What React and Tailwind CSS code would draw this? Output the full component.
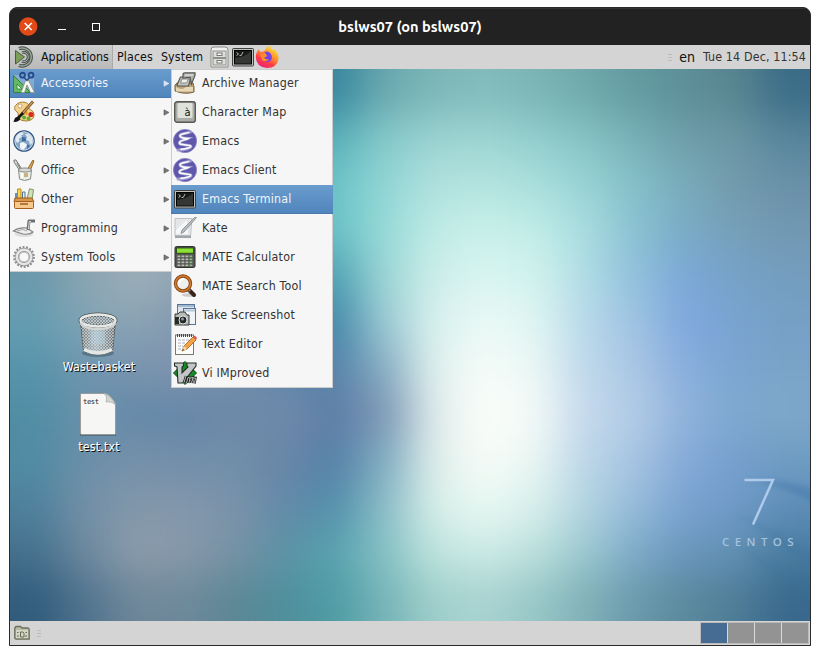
import React from "react";

const UI_FONT = "font-['DejaVu_Sans_Condensed','DejaVu_Sans',sans-serif] [font-stretch:condensed]";

/* Wallpaper: rows of colour samples, softened into one another. */
const WALL = [
  "3f7f92 3f7f92 3f7f92 3f7f92 3f7f92 3f7f92 3787a0 69a8ae 7cb6b7 83bcbc 7bb5b5 6fa9ab 639aa0 5d8f99 58858f 3a6c87",
  "5a9fae 5a9fae 5a9fae 5a9fae 5a9fae 55a5b0 58b0b8 86c9cb 9bd3d1 9cd5d2 93cecd 86c2c5 78b0b7 6d9ea9 6c96a4 57859c",
  "6aa5b0 6aa5b0 6aa5b0 6aa5b0 6aa5b0 65b5bd 6cc4c8 92d6d5 b0e1de b4e4e0 a9dfdc 98d3d5 85bfc8 78acba 739aab 6990a8",
  "6f97ab 85a0af 94abb7 8ca3b3 7aa0b0 5fafba 6ac2c7 97dad8 c0ebe6 c9f0ea c1ede8 a8dddf 8ac1d2 79abc6 769fb8 7298b2",
  "6a98aa 8ba4b1 9dafb9 92a5b4 7a9ab0 4f95aa 4fa2b3 9dd6d6 cdeeea d9f5f1 d1f2ee b0dce5 91c0dc 7aa8d8 76a2c8 749dbe",
  "669db2 7fa4b5 8ca3b4 8099b0 7390ad 4f85a6 4388aa 9ccad3 d8f1ee ebf9f6 dff6f2 b8d9ea 9ec2e2 7fa8de 78a3d0 75a0c5",
  "5594ab 7095ae 7a94ae 7f93ac 7390ad 5f88ab 5682aa 88aec3 e0f1ee f5fcf9 eaf7f5 bfd8eb a9c6e4 89aedd 7ba6d1 7aa3c8",
  "508ea4 688fab 6389a9 6487a9 6f88a8 708aaa 5e7da5 7d97b5 dfeceb fdfefa f3faf7 c5d9ec b3cce6 90b3dc 7da8d0 7ea8ca",
  "508ba4 6b8fa9 7690a9 728eaa 708ea9 6886a8 5580a8 80adc1 dfeeeb f7fcf8 e9f6f3 bdd6e8 a6c4e2 85aad8 779fce 6e9cc2",
  "4f819d 7390a7 8297aa 8397ab 7a93aa 6389a8 5290ab 8cbdc7 d8efe9 e9f8f3 d8f0ec b2d4e0 95bbda 7aa2d0 6f9ac8 5e8eb8",
  "45718e 6e899f 8c9dac 8899ab 7792a5 5c93a6 58a3b0 86c2c5 bfe4de cdebe6 bce0dd 9cc8d0 7eaac9 6a97be 6190b3 4a7ca1",
  "315c7c 4f738e 6f8799 6d899a 5c8795 4f8f9c 4f9ca5 76b4b7 a0cfcb a9d3d1 98c7c7 81b1b8 6a9aac 5b899d 4f7d97 38688c",
].map((r) => r.split(" "));

function Wallpaper() {
  const cells = [];
  for (let r = -2; r < 14; r++) {
    for (let c = -2; c < 18; c++) {
      const row = WALL[Math.min(11, Math.max(0, r))];
      const col = row[Math.min(15, Math.max(0, c))];
      cells.push(<rect key={`${r}_${c}`} x={c * 50} y={r * 46} width="50.5" height="46.5" fill={`#${col}`} />);
    }
  }
  return (
    <svg className="absolute inset-0" width="800" height="552" viewBox="0 0 800 552">
      <defs>
        <filter id="soft" filterUnits="userSpaceOnUse" x="-100" y="-92" width="1000" height="736" colorInterpolationFilters="sRGB">
          <feGaussianBlur stdDeviation="21" />
        </filter>
        <filter id="ray" x="-20%" y="-50%" width="140%" height="200%"><feGaussianBlur stdDeviation="2.5" /></filter>
      </defs>
      <g filter="url(#soft)">{cells}</g>
      <g filter="url(#ray)">
        <path d="M738 411Q770 415 806 436V420Q775 410 738 411Z" fill="#3d6fa5" opacity=".35" />
        <path d="M725 445Q765 470 810 508V490Q775 462 725 445Z" fill="#3d6c9c" opacity=".2" />
        <path d="M725 475L810 540V520Z" fill="#3d6c9c" opacity=".2" />
      </g>
      <path d="M734.500 411H763L743 455.500" fill="none" stroke="#aecbec" strokeWidth="2.500" />
    </svg>
  );
}

function Svg({ children, size = 24, className = "" }) {
  return <svg width={size} height={size} viewBox="0 0 24 24" className={`shrink-0 ${className}`}>{children}</svg>;
}

const icons = {
  accessories: (
    <>
      <rect x="1" y="4" width="21" height="18" fill="#d7e4ee" opacity=".3" />
      <path d="M1.500 4.500V21.500H18.500Z" fill="#63b863" stroke="#318238" />
      <path d="M5 13V18H10Z" fill="#d8f0d7" stroke="#318238" strokeWidth=".8" />
      <path d="M14 8.500L16 8.500L22.500 21.500H18.500L15 14L12.500 21.500H9Z" fill="#f6f7f2" stroke="#8d938a" strokeWidth=".8" />
      <circle cx="10.500" cy="4.200" r="2.400" fill="#6f9ccc" stroke="#254d8c" strokeWidth="1.900" />
      <circle cx="19" cy="4.200" r="2.400" fill="#6f9ccc" stroke="#254d8c" strokeWidth="1.900" />
      <path d="M12 6.500L15 9.500L17.500 6.500" fill="none" stroke="#254d8c" strokeWidth="1.500" />
    </>
  ),
  graphics: (
    <>
      <path d="M4 5C8 0 18 2 17 7C15 10 22 9 22 15C22 21 14 22 9 20C4 18 8 14 5 12C2 10 2 7 4 5Z" fill="#f2d28f" stroke="#a77a31" />
      <circle cx="8" cy="6" r="2" fill="#fff" stroke="#b78b43" strokeWidth=".7" />
      <circle cx="12" cy="17.500" r="2" fill="#5aae35" /><circle cx="16.500" cy="18.500" r="2" fill="#6faa35" />
      <circle cx="19" cy="14.500" r="2.600" fill="#d72d21" /><circle cx="14" cy="13" r="2" fill="#ef9b25" />
      <path d="M21 1.500L10 14" stroke="#805322" strokeWidth="3" /><path d="M20.500 2L11 13" stroke="#c99a55" strokeWidth="1.200" />
      <path d="M10 12L5 17C2 17 3 21 1 21.500C5 23 9 20 8 18L12 14Z" fill="#151515" />
    </>
  ),
  internet: (
    <>
      <circle cx="12" cy="12" r="10.200" fill="#84a6ca" stroke="#33567d" strokeWidth="1.200" />
      <circle cx="12" cy="12" r="9.100" fill="none" stroke="#c5d8ea" />
      <path d="M4 8Q6 4 10 3.500L12 5L9 6.500L10 8L7 9.500L7.500 12L5.500 14L3.500 12Z" fill="#e3ebf1" />
      <path d="M13 5L17 4.500L20.500 9L20.500 14L18 16L17 12L14 11L15 8Z" fill="#dce6ef" />
      <path d="M8 14L11 13L15 15.500L14 18L11 21L8 19Z" fill="#f2f5f7" />
      <path d="M10 8L13.500 8.500L14 12L10 12.500Z M15.500 15L18 17L15 20Z" fill="#3f6a97" />
    </>
  ),
  office: (
    <>
      <path d="M8 13L2 4Q1 1 4 2L11 13" fill="#d8dad7" stroke="#777b77" /><path d="M5 5L9 12" stroke="#777b77" />
      <path d="M15 12L21 2L22 3L18 13" fill="#dfaa55" stroke="#95672a" />
      <path d="M6.500 12H19.500L18.500 21Q12 24 7.500 21Z" fill="#eceeeb" stroke="#858985" />
      <ellipse cx="13" cy="12" rx="6.500" ry="2" fill="#d7dad7" stroke="#858985" />
      <path d="M10 15V20" stroke="#fff" strokeWidth="2" /><rect x="12" y="15" width="4" height="4" fill="#c7b47c" />
    </>
  ),
  other: (
    <>
      <path d="M5.500 12V2H9V12" fill="#f8d751" stroke="#b08c18" /><path d="M10.500 12V5H13V12" fill="#e9eef2" stroke="#547097" />
      <path d="M15 12L17.500 1.800L21.500 2.800L20 13" fill="#cfe2b5" stroke="#7b9570" /><path d="M4 12V6" stroke="#4465a0" strokeWidth="1.500" />
      <path d="M3 11H20L22 15H2Z" fill="#d7984c" stroke="#9c5a1d" /><rect x="2.500" y="14.500" width="19" height="7" rx="1" fill="#f6c88d" stroke="#a65e1d" />
      <path d="M8 17H16" stroke="#9c5a1d" strokeWidth="1.500" />
    </>
  ),
  programming: (
    <>
      <ellipse cx="12" cy="18" rx="9.500" ry="3" fill="#ddd" />
      <path d="M1.500 15Q7 11 15 12L21 16Q18 19 11 18Z" fill="#eeeeed" stroke="#838583" strokeWidth="1.200" />
      <path d="M16 14L17 5H23" fill="none" stroke="#6e706f" strokeWidth="3" strokeLinejoin="round" />
      <path d="M16.500 13L17.300 5.500H19" fill="none" stroke="#e0e1df" />
      <path d="M5 15Q11 12 15 15" stroke="#a5a7a5" fill="none" />
    </>
  ),
  system: (
    <>
      <circle cx="12" cy="12" r="9.800" fill="none" stroke="#8c8e8c" strokeWidth="2.200" strokeDasharray="1.900 1.520" />
      <circle cx="12" cy="12" r="7.200" fill="none" stroke="#8c8e8c" strokeWidth="4" />
      <circle cx="12" cy="12" r="7.200" fill="none" stroke="#e5e6e5" strokeWidth="2.600" />
      <circle cx="12" cy="12" r="4.900" fill="#f7f7f7" stroke="#a5a6a5" strokeWidth=".8" />
    </>
  ),
  archive: (
    <>
      <path d="M2 14L4 12H20L21 16V21Q12 24 2 20Z" fill="#bba278" stroke="#75623f" />
      <path d="M3 16Q9 20 13 16H20V20.500H3Z" fill="#e7d7b6" />
      <path d="M4 14L7.500 6H18L15.500 15H5Z" fill="#c3c5c1" stroke="#555753" strokeWidth="1.200" />
      <path d="M10 7V3.500Q10 1.800 12 1.800H22V4.500L18.500 13L17 6.500Z" fill="#b1b3b0" stroke="#555753" strokeWidth="1.200" />
      <path d="M9 8H15.500L13.500 12H7.500Z" fill="#eeefec" stroke="#777974" strokeWidth=".8" /><path d="M12 4H20" stroke="#eeefec" strokeWidth="1.200" />
    </>
  ),
  charmap: (
    <>
      <rect x="1.700" y="1.700" width="20.600" height="20.600" rx="2.500" fill="#a9ada5" stroke="#555950" strokeWidth="1.400" />
      <rect x="4.500" y="3" width="15" height="15" rx="1.500" fill="#dfe2db" />
      <text x="11.500" y="15.800" fontSize="11" fontFamily="DejaVu Sans" fill="#111">à</text>
    </>
  ),
  emacs: (
    <>
      <circle cx="12" cy="12" r="11.600" fill="#5f57ab" stroke="#8781c4" strokeWidth=".8" />
      <path d="M5 21C11 21 20 19 17.500 16.800C15 15.500 5.500 16.500 6.500 13.500C7.500 11 12 11.200 15 9.500C12 9.500 5 8.500 7.500 5.800C10 4 14 4.500 17.500 2.800" fill="none" stroke="#a29dd0" strokeWidth="3" strokeLinecap="round" />
      <path d="M8 20.200C13 19.700 19 18.500 17.500 16.800C15 15.500 5.500 16.500 6.500 13.500C7.500 11 12 11.200 15 9.500C12 9.500 5 8.500 7.500 5.800C10 4.200 13 4.400 15.500 3.600" fill="none" stroke="#fff" strokeWidth="1.500" strokeLinecap="round" />
    </>
  ),
  terminal: (
    <>
      <rect x="1.500" y="3.500" width="21" height="17.500" rx="1" fill="#bfc1bd" stroke="#3f413e" />
      <rect x="3.500" y="5.500" width="17" height="13.500" fill="#171917" stroke="#000" />
      <path d="M4 13Q14 12 20 6V18.500H4Z" fill="#343734" />
      <path d="M5.500 7.500L7.500 9L5.500 10.500M8.500 10.500H10.500M12 7L10.500 10" stroke="#ddd" strokeWidth=".8" fill="none" />
    </>
  ),
  kate: (
    <>
      <path d="M2 2.500H19L17.500 20H2Z" fill="#e4e6e8" stroke="#bfc2c5" />
      <path d="M3 14L14 4L15 18H3Z" fill="#f6f7f8" />
      <path d="M2 19.500H18V22H2Z" fill="#9fa4a9" />
      <path d="M23.500 1.500L11 16L8 17.500L9 14L21.500 1.500Z" fill="#b9bcbf" stroke="#85898d" strokeWidth=".8" />
    </>
  ),
  calculator: (
    <>
      <rect x="2" y="1.500" width="20" height="21" rx="1.500" fill="#555753" stroke="#2e3430" />
      <rect x="3.500" y="3" width="17" height="5.200" fill="#8ae234" stroke="#253c15" strokeWidth=".8" />
      {[10.5, 13.5, 16.5, 19.5].map((y) => [4.500, 8.500, 12.500, 16.500].map((x) => <rect key={`${x}-${y}`} x={x} y={y} width="2.800" height="1.700" fill={x > 16 ? "#8fbd86" : "#b9beb4"} />))}
    </>
  ),
  search: (
    <>
      <ellipse cx="16" cy="21" rx="7" ry="1.800" fill="#ccc" />
      <path d="M15 15L21 21" stroke="#38251c" strokeWidth="4" strokeLinecap="round" /><path d="M15 15L17 17" stroke="#888" strokeWidth="2.500" />
      <circle cx="10" cy="9.500" r="7.500" fill="#eef1f0" stroke="#874312" strokeWidth="3.400" />
      <circle cx="10" cy="9.500" r="7.500" fill="none" stroke="#d27e30" strokeWidth="1.600" />
      <path d="M6 9Q7 5 11 5" stroke="#fff" strokeWidth="2" fill="none" />
    </>
  ),
  screenshot: (
    <>
      <rect x="4.500" y="1.500" width="17" height="12" fill="#dce6ef" stroke="#577497" /><path d="M5 3H21" stroke="#a3b9d2" strokeWidth="2" />
      <rect x="10.500" y="5.500" width="12" height="16" fill="#f0f4f8" stroke="#577497" /><path d="M11 7.500H22" stroke="#b5c7db" strokeWidth="2" />
      <path d="M2 11H5L7 9H12L14 12H16V22H2Z" fill="#b7bab6" stroke="#373b37" />
      <path d="M2 14H6V21H2Z" fill="#272b28" /><circle cx="10" cy="17" r="4" fill="#252927" stroke="#e1e3df" /><circle cx="9.500" cy="16" r="1.500" fill="#879caf" />
    </>
  ),
  editor: (
    <>
      <rect x="2.500" y="3" width="18" height="19.500" fill="#fbfbfa" stroke="#777974" />
      <path d="M4 3.500H20" stroke="#474a47" strokeWidth="3" strokeDasharray="1 1" />
      <path d="M5 8H17M5 11H13M5 14H10M5 17H9" stroke="#b0b2c7" strokeDasharray="3 1" />
      <path d="M9 19L11 14L20 5L23 8L14 17Z" fill="#f3a344" stroke="#a55d19" strokeWidth=".8" />
      <path d="M20 5L22 3.500L24 6L23 8Z" fill="#df5856" /><path d="M9 19L11 14L14 17Z" fill="#f1dbb7" /><path d="M9 19L10 17L11 18Z" fill="#222" />
    </>
  ),
  vim: (
    <>
      <path d="M12 .5L23.500 12L12 23.500L.5 12Z" fill="#158c28" stroke="#08430f" />
      <path d="M1.500 2H10.500V5L9 6V12L15 6L14 5V2H23V5L9.500 22H5L4 6L1.500 5Z" fill="#c3c6c6" stroke="#262c27" strokeWidth="1.100" />
      <path d="M13 15L11 21.500M13.500 22L15 16.500L17 17L16 22M17 17L20 16.500L18.500 22M20 17L22.500 17L21.500 22.500" stroke="#1a1a1a" strokeWidth="2.400" fill="none" />
      <path d="M13 15L11 21.500M13.500 22L15 16.500L17 17L16 22M17 17L20 16.500L18.500 22M20 17L22.500 17L21.500 22.500" stroke="#c9cccc" strokeWidth=".9" fill="none" />
    </>
  ),
  mate: (
    <>
      <path d="M6 3.600A9 9 0 1 1 6 20.400" fill="none" stroke="#454e47" strokeWidth="3.400" />
      <path d="M6 3.600A9 9 0 1 1 6 20.400" fill="none" stroke="#9aa59a" strokeWidth="1.500" />
      <path d="M9 7.600A4.700 4.700 0 1 1 9 16.400" fill="none" stroke="#454e47" strokeWidth="3" />
      <path d="M9 7.600A4.700 4.700 0 1 1 9 16.400" fill="none" stroke="#9aa59a" strokeWidth="1.200" />
      <path d="M2.500 5.500L11.500 12L2.500 19Z" fill="#7c9e5a" stroke="#4a5c42" />
    </>
  ),
  cabinet: (
    <>
      <path d="M4 5Q4 2 7 2H18Q21 2 21 5V22H4Z" fill="#f1f2ef" stroke="#898b87" />
      <rect x="6" y="6" width="13" height="6.500" fill="#dddfda" stroke="#8e908c" /><rect x="6" y="13.500" width="13" height="6.500" fill="#dddfda" stroke="#8e908c" />
      <rect x="10" y="8" width="5" height="2.500" fill="#fff" stroke="#777" /><rect x="10" y="15.500" width="5" height="2.500" fill="#fff" stroke="#777" />
    </>
  ),
  firefox: (
    <>
      <defs>
        <linearGradient id="ff" x1=".8" y1="0" x2=".2" y2="1"><stop offset="0" stopColor="#fff14a" /><stop offset=".38" stopColor="#ff9a2c" /><stop offset=".7" stopColor="#ff3b47" /><stop offset="1" stopColor="#e61b82" /></linearGradient>
      </defs>
      <path d="M4 4L5 7L9 6Q11 3 15 0Q15 3 18 5L19 4Q24 9 23.500 14Q22 23 12 23Q1 22 .8 12Q1 7 4 4Z" fill="url(#ff)" />
      <path d="M9 7Q14 5 16.500 10Q18 16 12.500 17Q8 17 7 12L11 11Q12 9 9 7Z" fill="#7542e5" />
      <path d="M5 9Q9 8 12 10Q12 12 9 12.500Q10 15 14 14Q11 18 7 15Z" fill="#ff8b2d" />
    </>
  ),
};

function Item({ icon, label, active, arrow }) {
  return (
    <div className={`flex h-[29px] shrink-0 items-center tracking-[0.2px] ${active ? "bg-linear-to-b from-[#6a9ccd] to-[#4f84bc] text-[#f0f4f8] shadow-[inset_0_-1px_#487ab0]" : "text-[#333]"}`}>
      <Svg className="mb-px ml-0.5">{icons[icon]}</Svg>
      <span className="ml-[5px] flex-1 whitespace-nowrap pb-px">{label}</span>
      {arrow && (
        <svg width="7" height="7" viewBox="0 0 7 7" className="mr-px"><path d="M1 .8L6 3.500L1 6.200Z" fill={active ? "#d8e5f2" : "#777"} stroke={active ? "#d8e5f2" : "#555"} strokeWidth=".6" /></svg>
      )}
    </div>
  );
}

const MENU = [["accessories", "Accessories"], ["graphics", "Graphics"], ["internet", "Internet"], ["office", "Office"], ["other", "Other"], ["programming", "Programming"], ["system", "System Tools"]];
const SUB = [["archive", "Archive Manager"], ["charmap", "Character Map"], ["emacs", "Emacs"], ["emacs", "Emacs Client"], ["terminal", "Emacs Terminal"], ["kate", "Kate"], ["calculator", "MATE Calculator"], ["search", "MATE Search Tool"], ["screenshot", "Take Screenshot"], ["editor", "Text Editor"], ["vim", "Vi IMproved"]];

function Grip() {
  return (
    <div className="flex w-1 flex-col gap-0.5">
      <i className="h-px bg-[#bcbcbc]" /><i className="h-px bg-[#bcbcbc]" /><i className="h-px bg-[#bcbcbc]" />
    </div>
  );
}

function Wastebasket() {
  return (
    <svg width="42" height="46" viewBox="0 0 42 46">
      <defs>
        <pattern id="mesh" width="3" height="3" patternUnits="userSpaceOnUse"><path d="M0 0L3 3M3 0L0 3" stroke="#dfe3e3" strokeWidth=".55" /></pattern>
        <linearGradient id="tin"><stop offset="0" stopColor="#777b7c" /><stop offset=".45" stopColor="#a0b2bc" /><stop offset="1" stopColor="#6e7273" /></linearGradient>
      </defs>
      <ellipse cx="21" cy="41" rx="16" ry="4" fill="#33444e" opacity=".4" />
      <path d="M3.500 9L6.500 39Q21 46 35.500 39L38.500 9Z" fill="url(#tin)" stroke="#555957" />
      <path d="M3.500 9L6.500 39Q21 46 35.500 39L38.500 9Z" fill="url(#mesh)" />
      <rect x="14" y="19" width="14" height="13" fill="#b9d4e4" opacity=".4" />
      <path d="M7 37.500Q21 44.500 35 37.500" fill="none" stroke="#e5e7e5" strokeWidth="3.500" />
      <ellipse cx="21" cy="8.500" rx="17.500" ry="6" fill="#83929a" stroke="#4e5250" strokeWidth="4" />
      <ellipse cx="21" cy="8.500" rx="17.500" ry="6" fill="url(#mesh)" stroke="#e7e9e7" strokeWidth="2.400" />
      <path d="M3.500 11Q8 17 21 17Q34 17 38.500 11" fill="none" stroke="#d2d5d3" strokeWidth="2.500" />
    </svg>
  );
}

function Doc() {
  return (
    <svg width="38" height="45" viewBox="0 0 38 45">
      <path d="M1 42H37V44H1Z" fill="#3d4d57" opacity=".5" />
      <path d="M1.500 2.500Q1.500 1.500 3 1.500H26Q31 2 36.500 12V41.500Q36.500 42.500 35 42.500H3Q1.500 42.500 1.500 41Z" fill="#f6f6f5" stroke="#9a9c9a" />
      <path d="M25 1.500Q29 4 27 10Q33 9 36.500 13Q33 4 25 1.500Z" fill="#d3d5d3" stroke="#aaacaa" strokeWidth=".8" />
      <text x="4" y="12" fontSize="7.200" fontFamily="DejaVu Sans Mono" fill="#222" textLength="16">test</text>
    </svg>
  );
}

const LABEL = "whitespace-nowrap text-white tracking-[0.15px] [text-shadow:1px_1px_0_#111]";

export default function App() {
  return (
    <div className={`h-[655px] w-[820px] overflow-hidden bg-white pl-[9px] pt-[7px] text-[12.35px] leading-4 ${UI_FONT}`}>
      <div className="flex h-[639px] w-[802px] flex-col overflow-hidden rounded-t-[8px] border border-[#2b2b2b] bg-[#222]">
        <header className="relative flex h-[37px] shrink-0 items-center border-t border-[#353535] pl-[9px]">
          <svg width="90" height="20" viewBox="0 0 90 20">
            <circle cx="9.200" cy="9.500" r="9.200" fill="#e24b17" />
            <path d="M5.700 6L12.700 13M12.700 6L5.700 13" stroke="#fff" strokeWidth="1.500" />
            <path d="M39 12.500H47" stroke="#fff" />
            <rect x="73.500" y="6.500" width="7" height="7" fill="none" stroke="#fff" />
          </svg>
          <h1 className="absolute inset-x-0 text-center font-['Ubuntu','Noto_Sans',sans-serif] text-[14.6px] font-bold text-white [font-stretch:normal]">bslws07 (on bslws07)</h1>
        </header>

        <nav className="flex h-6 shrink-0 items-center bg-[#d4d4d4] text-[#111]">
          <div className="flex h-6 w-[103px] items-center border-r border-[#aaa] bg-linear-to-b from-[#cecece] to-[#b9b9b9] pl-[3px]">
            <Svg>{icons.mate}</Svg>
            <span className="ml-1">Applications</span>
          </div>
          <span className="ml-1 tracking-[0.1px]">Places</span>
          <span className="ml-2 tracking-[0.15px]">System</span>
          <div className="ml-1 flex">
            <Svg>{icons.cabinet}</Svg><Svg>{icons.terminal}</Svg><Svg>{icons.firefox}</Svg>
          </div>
          <div className="ml-auto flex items-center pr-1">
            <Grip />
            <span className="ml-[7px] text-[14px]">en</span>
            <span className="ml-2 tracking-[0.15px] text-[#333]">Tue 14 Dec, 11:54</span>
          </div>
        </nav>

        <main className="relative h-[552px] shrink-0 overflow-hidden">
          <Wallpaper />
          <div className="absolute left-[712px] top-[465px] font-['Open_Sans',sans-serif] text-[11.5px] font-semibold leading-4 tracking-[5.4px] text-[#a3c2de] [font-stretch:normal]">CENTOS</div>
          <div className="absolute left-[48px] top-[243px] flex w-20 flex-col items-center">
            <Wastebasket />
            <span className={`${LABEL} ml-0.5 mt-px`}>Wastebasket</span>
          </div>
          <div className="absolute left-[48px] top-[323px] flex w-20 flex-col items-center">
            <Doc />
            <span className={`${LABEL} ml-0.5 mt-0.5`}>test.txt</span>
          </div>
          <div className="absolute left-0 top-0 flex h-[203px] w-[161px] flex-col overflow-hidden border-b border-[#ccc] bg-[#f6f6f6]">
            {MENU.map(([i, l], n) => <Item key={l} icon={i} label={l} active={n === 0} arrow />)}
          </div>
          <div className="absolute left-[161px] top-0 flex h-[319px] w-[162px] flex-col overflow-hidden bg-[#f6f6f6] shadow-[inset_0_0_0_1px_#ccc]">
            {SUB.map(([i, l], n) => <Item key={l} icon={i} label={l} active={n === 4} />)}
          </div>
        </main>

        <footer className="flex h-6 shrink-0 items-center bg-[#d4d4d4] pl-1">
          <svg width="16" height="16" viewBox="0 0 16 16">
            <path d="M.8 13.500V3L2 1.500H6.500L8 3H14Q15.200 3 15.200 5V14.200H2Z" fill="#b9bca6" stroke="#6b705a" strokeWidth="1.300" />
            <rect x="2" y="5" width="12" height="8" fill="#d3d6c4" />
            <path d="M6.500 7H9L10 8.500V12H6.500ZM3 7.500H4.500M3 11H5M11.500 7.500H13M11 11H13" fill="none" stroke="#666b57" />
          </svg>
          <div className="ml-[7px]"><Grip /></div>
          <div className="ml-auto mr-px flex gap-px border border-[#bbb] bg-[#d9d9d9]">
            <i className="h-5 w-[26px] bg-[#466c93]" /><i className="h-5 w-[26px] bg-[#939393]" /><i className="h-5 w-[26px] bg-[#939393]" /><i className="h-5 w-[26px] bg-[#939393]" />
          </div>
        </footer>
      </div>
    </div>
  );
}
